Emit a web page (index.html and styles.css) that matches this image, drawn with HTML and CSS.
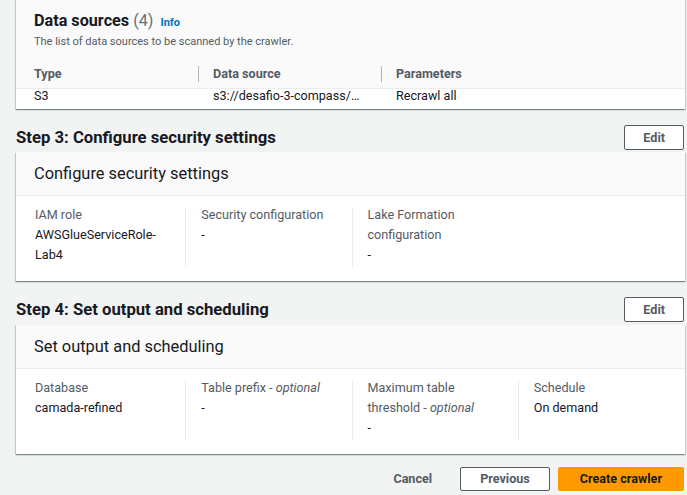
FILE: index.html
```html
<!DOCTYPE html>
<html lang="en">
<head>
<meta charset="utf-8">
<title>Review and create</title>
<link rel="stylesheet" href="styles.css">
</head>
<body>
<div class="page">
  <section class="card ds-card">
    <div class="ds-head">
      <h2 class="ds-title">Data sources <span class="count">(4)</span> <a class="info" href="#">Info</a></h2>
      <p class="ds-desc">The list of data sources to be scanned by the crawler.</p>
      <div class="trow thead">
        <div class="tcell c1">Type</div>
        <div class="tcell c2">Data source</div>
        <div class="tcell c3">Parameters</div>
      </div>
    </div>
    <div class="tbody">
      <div class="trow">
        <div class="tcell c1">S3</div>
        <div class="tcell c2">s3://desafio-3-compass/…</div>
        <div class="tcell c3">Recrawl all</div>
      </div>
    </div>
  </section>

  <div class="step-row">
    <h2 class="step-title">Step 3: Configure security settings</h2>
    <button class="btn">Edit</button>
  </div>
  <section class="card">
    <div class="card-head">Configure security settings</div>
    <div class="cols">
      <div class="col">
        <div class="lbl">IAM role</div>
        <div class="val">AWSGlueServiceRole-<br>Lab4</div>
      </div>
      <div class="col">
        <div class="lbl">Security configuration</div>
        <div class="val">-</div>
      </div>
      <div class="col">
        <div class="lbl">Lake Formation<br>configuration</div>
        <div class="val">-</div>
      </div>
      <div class="col empty"></div>
    </div>
  </section>

  <div class="step-row step4">
    <h2 class="step-title">Step 4: Set output and scheduling</h2>
    <button class="btn">Edit</button>
  </div>
  <section class="card">
    <div class="card-head">Set output and scheduling</div>
    <div class="cols">
      <div class="col">
        <div class="lbl">Database</div>
        <div class="val">camada-refined</div>
      </div>
      <div class="col">
        <div class="lbl">Table prefix - <i>optional</i></div>
        <div class="val">-</div>
      </div>
      <div class="col">
        <div class="lbl">Maximum table<br>threshold - <i>optional</i></div>
        <div class="val">-</div>
      </div>
      <div class="col">
        <div class="lbl">Schedule</div>
        <div class="val">On demand</div>
      </div>
    </div>
  </section>

  <div class="footer">
    <button class="btn link">Cancel</button>
    <button class="btn prev">Previous</button>
    <button class="btn primary">Create crawler</button>
  </div>
</div>
</body>
</html>
```

FILE: styles.css
```css
* { box-sizing: border-box; }
html, body { margin: 0; padding: 0; }
body {
  background: #f2f3f3;
  font-family: Roboto, "Liberation Sans", sans-serif;
  color: #16191f;
  font-size: 12.6px;
  line-height: 20px;
  overflow: hidden;
}
.page {
  width: 687px;
  padding: 0 2px 0 16px;
  margin-top: -12px;
}
.card {
  background: #fff;
  box-shadow: 0 1px 1px 0 rgba(0,28,36,.3), 1px 1px 1px 0 rgba(0,28,36,.15), -1px 1px 1px 0 rgba(0,28,36,.15);
}
.ds-head {
  background: #fafafa;
  border-bottom: 1px solid #eaeded;
  padding-top: 22px;
}
.ds-title {
  margin: 0;
  padding-left: 18px;
  font-size: 16.2px;
  line-height: 22px;
  font-weight: 700;
}
.count { color: #687078; font-weight: 400; }
.info {
  color: #0073bb;
  font-size: 11px;
  font-weight: 700;
  text-decoration: none;
  margin-left: 3px;
}
.ds-desc {
  margin: 0;
  padding-left: 18px;
  font-size: 11px;
  line-height: 16px;
  color: #545b64;
}
.trow { display: flex; }
.thead { margin-top: 14px; padding-bottom: 4px; }
.tcell { padding-left: 18px; }
.c1 { width: 182px; }
.c2 { width: 183px; }
.c3 { flex: 1; }
.thead .tcell {
  font-weight: 700;
  color: #545b64;
  line-height: 20px;
  position: relative;
}
.thead .c2, .thead .c3 { padding-left: 15px; }
.thead .c2::before, .thead .c3::before {
  content: "";
  position: absolute;
  left: 0;
  top: 2px;
  height: 16px;
  border-left: 1px solid #aab7b8;
}
.tbody { height: 20px; overflow: hidden; }
.tbody .tcell { line-height: 13px; }
.tbody .c2, .tbody .c3 { padding-left: 15px; }

.step-row {
  display: flex;
  justify-content: space-between;
  align-items: center;
  margin-top: 16px;
  margin-bottom: 2px;
}
.step4 { margin-top: 16px; margin-bottom: 3px; }
.step-title {
  margin: 0;
  font-size: 16.7px;
  line-height: 22px;
  font-weight: 700;
}
.btn {
  font-family: inherit;
  font-size: 12.6px;
  font-weight: 700;
  color: #545b64;
  background: #fff;
  border: 1px solid #545b64;
  border-radius: 2px;
  height: 25px;
  padding: 0 18px;
  line-height: 22px;
  margin-right: 1px;
}
.card-head {
  background: #fafafa;
  border-bottom: 1px solid #eaeded;
  padding: 10px 18px 10px;
  font-size: 16.4px;
  line-height: 23px;
}
.cols {
  display: grid;
  grid-template-columns: repeat(4, 1fr);
  padding: 11px 1px 14px 3px;
}
.col {
  padding-left: 15px;
  border-left: 1px solid #eaeded;
  min-height: 60px;
}
.col:first-child, .col.empty { border-left-color: transparent; }
.lbl { color: #545b64; }
.val { color: #16191f; }
.lbl, .val { position: relative; top: -2px; }

.footer {
  display: flex;
  justify-content: flex-end;
  gap: 7px;
  margin-top: 13px;
}
.footer .btn { height: 24px; padding: 0 21px; }
.footer .btn.prev { padding: 0 19px; }
.footer .btn.link { border-color: transparent; background: transparent; padding: 0 19px; }
.btn.primary { background: #ff9900; border-color: #ff9900; color: #16191f; }
```
